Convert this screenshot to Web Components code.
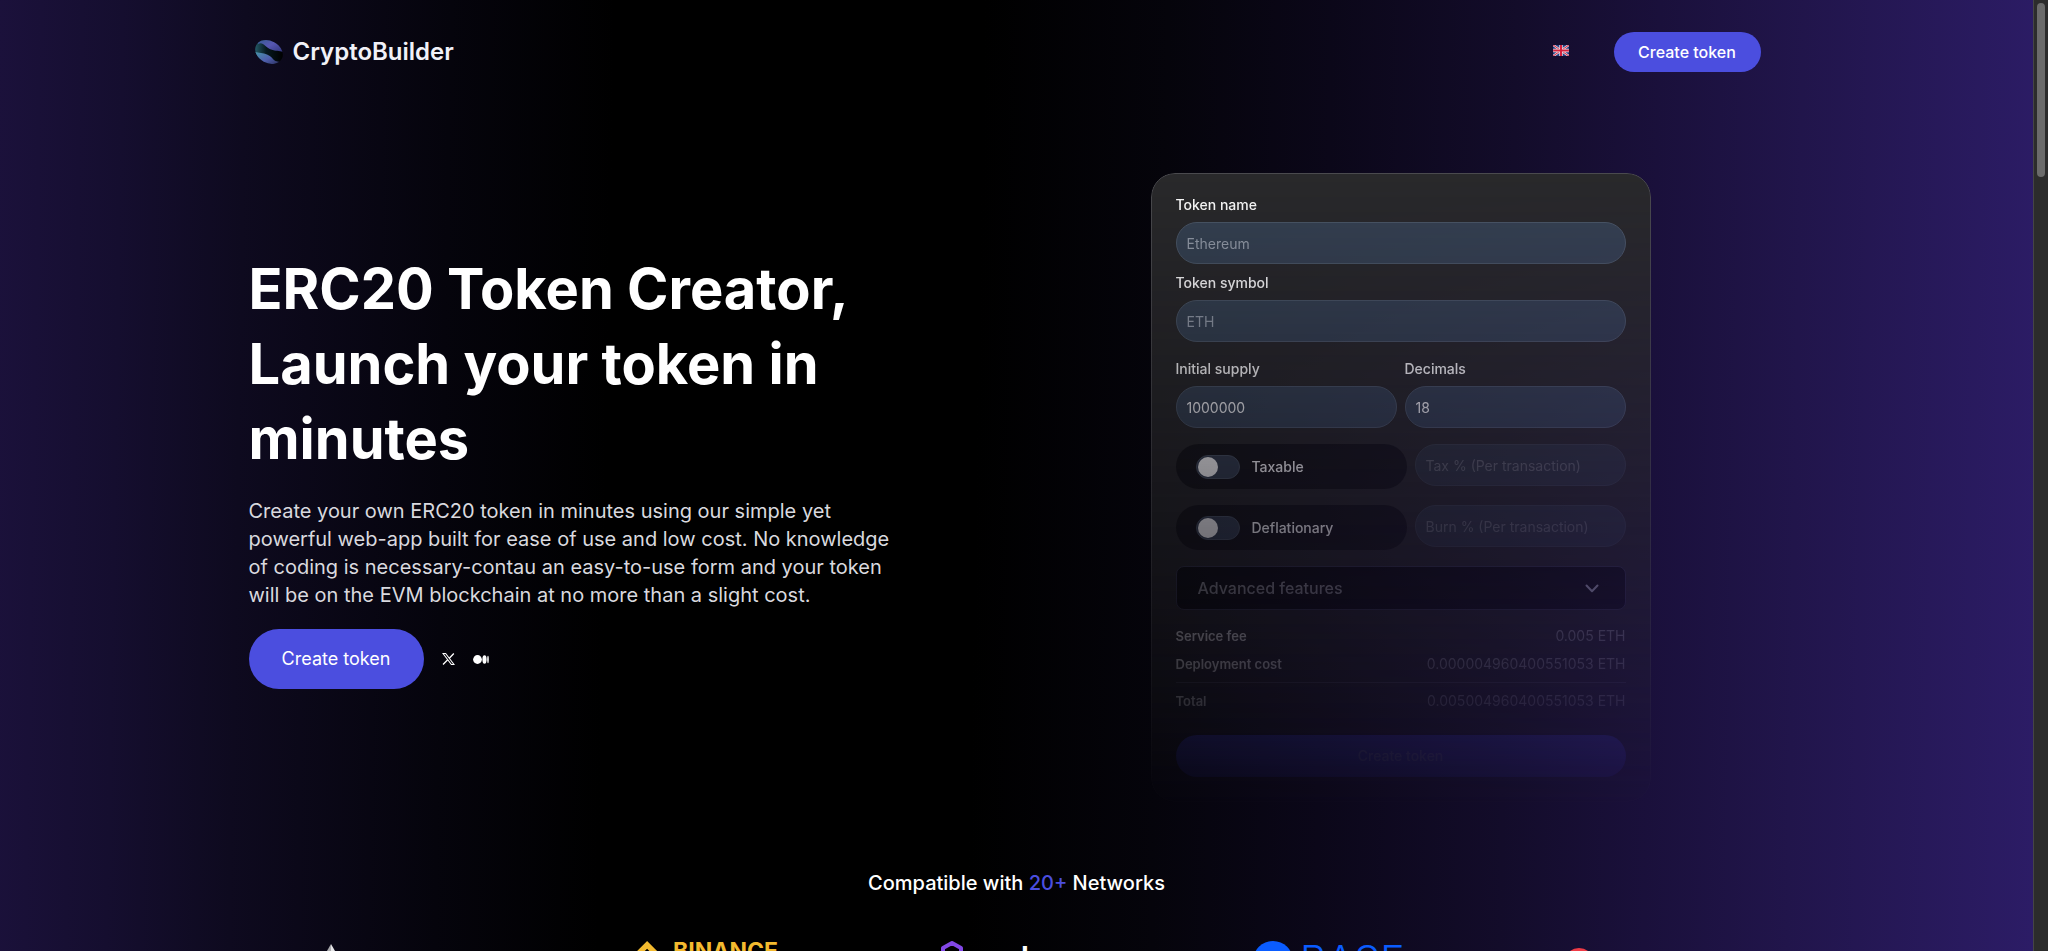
<!DOCTYPE html>
<html lang="en">
<head>
<meta charset="utf-8">
<meta name="viewport" content="width=device-width, initial-scale=1">
<title>CryptoBuilder – ERC20 Token Creator</title>
<style>
  body { margin: 0; background: #000; color: #fff; font-family: Inter, "Liberation Sans", sans-serif; }
</style>
</head>
<body>
<cb-app></cb-app>
<script>
const define = (name, html, setup) => {
  const tpl = document.createElement('template');
  tpl.innerHTML = html;
  customElements.define(name, class extends HTMLElement {
    constructor() {
      super();
      this.attachShadow({ mode: 'open' }).append(tpl.content.cloneNode(true));
      if (setup) setup.call(this, this.shadowRoot);
    }
  });
};

/* ---------- shared controls ---------- */
define('cb-button', `
<style>
  :host { display: inline-block; }
  button { box-sizing: border-box; width: 100%; min-width: 147px; height: 40px; padding: 0 24px; border: 0; border-radius: 30px;
    background: #4b4edf; color: inherit; font: 500 16px/20px Inter, sans-serif; white-space: nowrap; cursor: pointer; }
  :host([size=large]) button { min-width: 175px; height: 60px; font-size: 18px; font-weight: 400; }
  :host([size=block]) button { height: 42px; border-radius: 21px; font-size: 14px; color: #ffffff60; }
</style>
<button type="button"><slot></slot></button>`);

define('cb-field', `
<style>
  :host { display: block; min-width: 0; }
  label { display: block; margin-bottom: 10px; font: 500 14px/14px Inter, sans-serif; }
  label:empty { display: none; }
  input { box-sizing: border-box; display: block; width: 100%; height: 42px; padding: 0 10px; border: 1px solid #4b5767;
    border-radius: 21px; background: #364252; color: #f3f4f6; font: 400 14px/20px Inter, sans-serif; }
  input::placeholder { color: #959daa; opacity: 1; }
  input:disabled { opacity: .5; }
</style>
<label for="i"></label><input id="i" type="text">`, function (root) {
  const input = root.querySelector('input');
  root.querySelector('label').textContent = this.getAttribute('label') || '';
  input.placeholder = this.getAttribute('placeholder') || '';
  input.value = this.getAttribute('value') || '';
  input.disabled = this.hasAttribute('disabled');
  if (!this.hasAttribute('label')) input.setAttribute('aria-label', input.placeholder);
});

define('cb-toggle', `
<style>
  :host { display: block; }
  label { box-sizing: border-box; display: flex; align-items: center; gap: 12px; height: 45px; padding: 0 20px;
    border-radius: 23px; background: #0d0d10a0; font: 500 14px/20px Inter, sans-serif; }
  input { appearance: none; box-sizing: border-box; display: flex; width: 44px; height: 24px; margin: 0; padding: 1px;
    border: 1px solid #4b5563; border-radius: 12px; background: #374151; }
  input::before { content: ""; width: 20px; height: 20px; border-radius: 50%; background: #fff; }
  input:checked { justify-content: flex-end; }
</style>
<label><input type="checkbox" role="switch"><slot></slot></label>`);

/* ---------- header ---------- */
define('cb-header', `
<style>
  :host { display: block; padding: 32px 24px 0 6px; }
  header { display: flex; align-items: center; }
  a { display: flex; align-items: center; gap: 10px; color: #f1f1f8; font-size: 24px; line-height: 32px; font-weight: 600; text-decoration: none; }
  .lang { display: flex; margin-left: auto; margin-right: 45px; padding: 0 0 3px; border: 0; background: none; }
</style>
<header>
  <a href="#">
    <svg width="28" height="24" viewBox="0 0 28 24" aria-hidden="true">
      <defs>
        <linearGradient id="a" x1="0" y1="0" x2="1" y2="1"><stop offset="0" stop-color="#315c8e"/><stop offset=".5" stop-color="#5757b2"/><stop offset="1" stop-color="#30367c"/></linearGradient>
        <linearGradient id="b" x1="0" y1="0" x2="1" y2="1"><stop offset="0" stop-color="#4795a8"/><stop offset=".5" stop-color="#4f5fae"/><stop offset="1" stop-color="#24264d"/></linearGradient>
        <linearGradient id="c" x1="0" y1="0" x2="1" y2="0"><stop offset="0" stop-color="#245967"/><stop offset=".4" stop-color="#06191f"/><stop offset="1" stop-color="#000"/></linearGradient>
        <clipPath id="e"><ellipse cx="14" cy="12" rx="14.5" ry="11" transform="rotate(28 14 12)"/></clipPath>
      </defs>
      <g clip-path="url(#e)">
        <path fill="url(#c)" d="M0 0h28v24H0z"/>
        <path fill="url(#a)" d="M3 4C8 1 10 7 16 9.500c5 2 8 1 12 2.500V-2H3z"/>
        <path fill="url(#b)" d="M0 12c4 1 8 1 12 2.500 6 2 5 7 13 7.500l-2 4H0z"/>
      </g>
    </svg>
    CryptoBuilder</a>
  <button class="lang" type="button" aria-label="English">
    <svg width="16" height="11" viewBox="0 0 60 42"><path fill="#234083" d="M0 0h60v42H0z"/><path stroke="#e9e4ee" stroke-width="9" d="M0 0l60 42M60 0L0 42"/><path stroke="#d63048" stroke-width="4" d="M0 0l60 42M60 0L0 42"/><path stroke="#eee9ee" stroke-width="13" d="M30 0v42M0 21h60"/><path stroke="#d4213d" stroke-width="8" d="M30 0v42M0 21h60"/></svg>
  </button>
  <cb-button>Create token</cb-button>
</header>`);

/* ---------- hero copy ---------- */
define('cb-hero', `
<style>
  :host { display: block; max-width: 664px; padding-top: 79px; }
  h1 { margin: 0 0 20px; font-size: 56px; line-height: 75px; font-weight: 700; }
  p { margin: 0 0 20px; color: #d9d9df; font-size: 20px; line-height: 28px; }
  .row { display: flex; align-items: center; gap: 18px; }
  a { display: flex; }
</style>
<h1>ERC20 Token Creator, Launch your token in minutes</h1>
<p>Create your own ERC20 token in minutes using our simple yet powerful web-app built for ease of use and low cost. No knowledge of coding is necessary-contau an easy-to-use form and your token will be on the EVM blockchain at no more than a slight cost.</p>
<div class="row">
  <cb-button size="large">Create token</cb-button>
  <a href="#" aria-label="X"><svg width="13" height="12" viewBox="0 0 13 12" fill="none" stroke="#fff"><path d="M1 .5h2.6L12 11.5H9.400z" stroke-width="1.100"/><path d="M11.800 .5L7.300 5.300M5.700 6.800L1 11.500" stroke-width="1.300"/></svg></a>
  <a href="#" aria-label="Medium"><svg width="16" height="9" viewBox="0 0 16 9" fill="#fff"><circle cx="4.500" cy="4.500" r="4.400"/><ellipse cx="11.500" cy="4.500" rx="2.100" ry="4.200"/><ellipse cx="15" cy="4.500" rx=".8" ry="3.700"/></svg></a>
</div>`);

/* ---------- token form preview ---------- */
define('cb-token-card', `
<style>
  :host { box-sizing: border-box; display: block; width: 500px; max-width: 100%; padding: 24px; border: 1px solid #4a4a4e;
    border-radius: 24px; background: #29292b; -webkit-mask-image: linear-gradient(#000, transparent 103%); mask-image: linear-gradient(#000, transparent 103%); }
  form { display: flex; flex-direction: column; gap: 16px; }
  .names { display: grid; gap: 12px; margin-bottom: 4px; }
  .pair { display: grid; grid-template-columns: 1fr 1fr; gap: 8px; }
  .opt { display: grid; grid-template-columns: 231px 1fr; gap: 8px; align-items: start; }
  .more { box-sizing: border-box; display: flex; align-items: center; justify-content: space-between; height: 44px; padding: 0 26px 0 21px;
    border: 1px solid #36364a; border-radius: 8px; background: #101012; color: #8c8c92; font: 500 16px/20px Inter, sans-serif; }
  dl { display: grid; gap: 8px; margin: 0; font-size: 14px; line-height: 20px; }
  dl div { display: flex; justify-content: space-between; }
  dt { font-size: 13px; font-weight: 600; color: #dededf; }
  dd { margin: 0; color: #8a8a92; }
  .total { padding-top: 8px; border-top: 1px solid #4c4c56; }
  cb-button { display: block; margin-top: 8px; }
</style>
<form>
  <div class="names">
    <cb-field label="Token name" placeholder="Ethereum"></cb-field>
    <cb-field label="Token symbol" placeholder="ETH"></cb-field>
  </div>
  <div class="pair">
    <cb-field label="Initial supply" value="1000000"></cb-field>
    <cb-field label="Decimals" value="18"></cb-field>
  </div>
  <div class="opt"><cb-toggle>Taxable</cb-toggle><cb-field placeholder="Tax % (Per transaction)" disabled></cb-field></div>
  <div class="opt"><cb-toggle>Deflationary</cb-toggle><cb-field placeholder="Burn % (Per transaction)" disabled></cb-field></div>
  <button class="more" type="button">Advanced features
    <svg width="14" height="9" viewBox="0 0 14 9" fill="none" stroke="#b4b4c8" stroke-width="2" stroke-linecap="round" stroke-linejoin="round"><path d="M1.500 1.500L7 7.200l5.500-5.700"/></svg>
  </button>
  <dl>
    <div><dt>Service fee</dt><dd>0.005 ETH</dd></div>
    <div><dt>Deployment cost</dt><dd>0.000004960400551053 ETH</dd></div>
    <div class="total"><dt>Total</dt><dd>0.005004960400551053 ETH</dd></div>
  </dl>
  <cb-button size="block">Create token</cb-button>
</form>`);

/* ---------- supported networks ---------- */
define('cb-networks', `
<style>
  :host { display: block; padding-top: 67px; }
  h2 { margin: 0 0 44px; text-align: center; font-size: 20px; line-height: 28px; font-weight: 500; }
  h2 span { color: #4b4edf; }
  .logos { display: grid; grid-template-columns: repeat(5, 1fr); justify-items: center; max-width: 1552px; margin: 0 auto; }
  svg { display: block; font-family: Inter, sans-serif; }
</style>
<h2>Compatible with <span>20+</span> Networks</h2>
<div class="logos">
  <svg width="152" height="46" role="img" aria-label="Ethereum"><path fill="#a9a9ad" d="M11 3L0 22l11 6z"/><path fill="#e4e4e6" d="M11 3l11 19-11 6z"/><path fill="#a9a9ad" d="M0 24l11 16V30z"/><path fill="#e4e4e6" d="M22 24L11 40V30z"/></svg>
  <svg width="152" height="46" role="img" aria-label="Binance"><g fill="#f3ba2f" transform="scale(.27)"><path d="M38.730 53.200L63.320 28.620l24.600 24.600 14.300-14.310L63.320 0 24.420 38.900zM0 63.310L14.300 49l14.310 14.310-14.310 14.300zM38.730 73.410L63.320 98l24.600-24.600 14.310 14.290-38.910 38.920-38.910-38.900zM98 63.310L112.300 49l14.310 14.300-14.310 14.320zM77.830 63.300L63.320 48.780 48.810 63.300l14.510 14.520z"/></g><text x="43" y="18" fill="#f3ba2f" font-size="23" font-weight="700">BINANCE</text></svg>
  <svg width="152" height="46" role="img" aria-label="Polygon"><path fill="none" stroke="#8247e5" stroke-width="4" stroke-linejoin="round" d="M12 2l9 5v11l-9 5-9-5V7z"/><text x="35" y="32" fill="#fff" font-size="37" font-weight="500">polygon</text></svg>
  <svg width="158" height="46" role="img" aria-label="Base"><circle cx="25" cy="20" r="20" fill="#0a5cff"/><text x="52" y="34" fill="#0a5cff" font-size="41" font-weight="300">BASE</text></svg>
  <svg width="152" height="46" role="img" aria-label="Optimism"><circle cx="18" cy="22" r="15" fill="#f03b46"/></svg>
</div>`);

/* ---------- page scrollbar ---------- */
define('cb-scrollbar', `
<style>
  :host { box-sizing: border-box; display: block; flex: 0 0 15px; padding: 3px; border-left: 1px solid #454545; background: #2c2c2c; }
  div { width: 8px; height: 174px; border-radius: 4px; background: #6b6b6b; }
</style><div></div>`);

define('cb-app', `
<style>
  :host { display: flex; height: 100vh; overflow: hidden; }
  main { flex: 1; min-width: 0; overflow: hidden;
    background: linear-gradient(91deg, #1b113b 0%, #150e2f 6%, #0e0a1f 12%, #05040c 22%, #000 30%, #000 48%, #05040b 57%, #0b0719 65%, #130c2a 74%, #1a103b 81%, #21154b 88%, #2c1c66 100%); }
  .wrap { max-width: 1536px; margin: 0 auto; }
  .hero { display: grid; grid-template-columns: 1fr 1fr; padding-top: 101px; }
  cb-token-card { justify-self: center; }
</style>
<main>
  <div class="wrap">
    <cb-header></cb-header>
    <section class="hero"><cb-hero></cb-hero><cb-token-card></cb-token-card></section>
  </div>
  <cb-networks></cb-networks>
</main>
<cb-scrollbar></cb-scrollbar>`);
</script>
</body>
</html>
